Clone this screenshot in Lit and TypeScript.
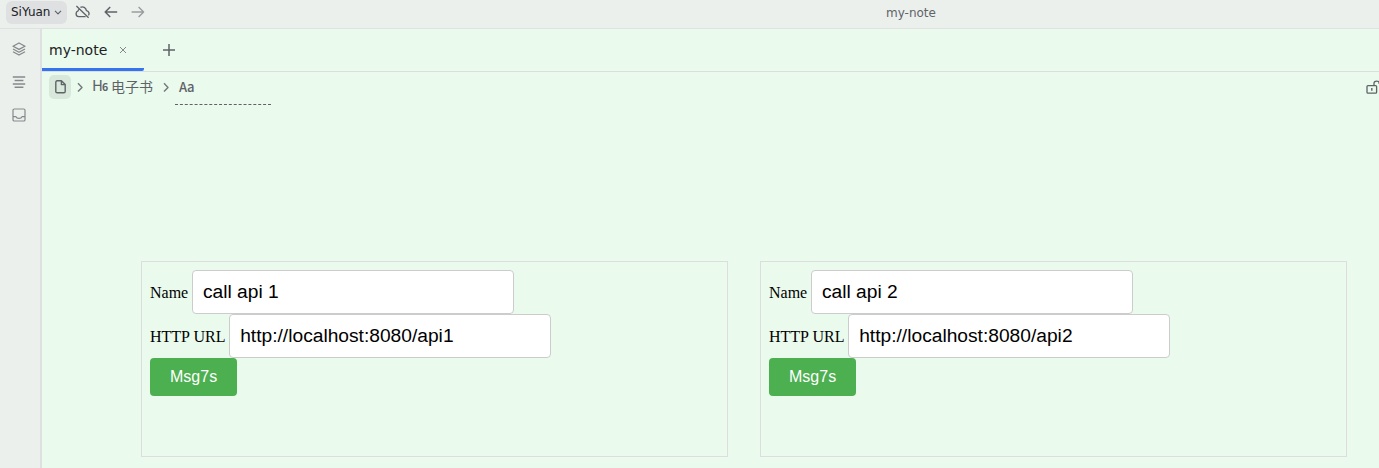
import { LitElement, html, css, svg } from "lit";
import { customElement, property } from "lit/decorators.js";

const icon = (body: unknown, w: number, h = w, cls = "") => html`
  <svg class=${cls} width=${w} height=${h} viewBox="0 0 ${w} ${h}" fill="none"
    stroke="currentColor" stroke-width="1.2" stroke-linejoin="round">${body}</svg>`;

const chevronDown = svg`<path d="M1 2.8 L4 5.8 L7 2.8"/>`;
const chevronRight = svg`<path d="M2 1.2 L6 5.4 L2 9.6" stroke-width="1.4"/>`;
const cloudOff = svg`<path d="M1.4 1 L13.6 12.8 M5.4 2.4 C8 1 10.9 2.8 11.4 5.6 C13.9 6 14.7 8.8 13.4 10.4 M3.8 4.3 C3.4 4.8 3.2 5.2 3.1 5.8 C0.4 6.6 0.3 11.4 3.8 11.6 H10.6" stroke-width="1.35"/>`;
const arrowLeft = svg`<path d="M13.2 7 H1.2 M6.2 2 L1.2 7 L6.2 12" stroke-width="1.5"/>`;
const arrowRight = svg`<path d="M0.6 7 H12.6 M7.6 2 L12.6 7 L7.6 12" stroke-width="1.4"/>`;
const layers = svg`<path d="M7 1 L13 4.2 L7 7.4 L1 4.2 Z M1 7 L7 10.2 L13 7 M1 9.8 L7 13 L13 9.8" stroke-width="1.3"/>`;
const outline = svg`<path d="M.8 2 H13.2 M2.6 5.5 H11.4 M.8 9 H13.2 M2.6 12.3 H11.4" stroke-width="1.4"/>`;
const inbox = svg`<rect x="1" y="1" width="12" height="12" rx="1.3"/><path d="M1 8.6 H4 C4.6 11 9.4 11 10 8.6 H13"/>`;
const cross = svg`<path d="M1 1 L7 7 M7 1 L1 7" stroke-width="1"/>`;
const plus = svg`<path d="M6 0 V12 M0 6 H12" stroke-width="1.5"/>`;
const doc = svg`<path d="M6.4 .8 H2.2 Q.8 .8 .8 2.2 V11.4 Q.8 12.8 2.2 12.8 H8.8 Q10.2 12.8 10.2 11.4 V4.6 Z M6.4 .8 V4.6 H10.2" stroke-width="1.4"/>`;
const unlock = svg`<rect x="1" y="5.6" width="9.6" height="7.6" rx="1" stroke-width="1.3"/><path d="M8 5.4 V3.2 C8 0.4 13.2 0.4 13.2 3.2 V4" stroke-width="1.3"/><path d="M5.8 8 V10.8" stroke-width="1.4"/>`;

@customElement("api-form")
class ApiForm extends LitElement {
  @property() name = "";
  @property() url = "";

  static styles = css`
    :host {
      display: block;
      box-sizing: border-box;
      width: 587px;
      height: 196px;
      padding: 8px;
      border: 1px solid #dddddd;
      font: 16px "Liberation Serif", serif;
      color: #000;
    }
    .row { display: flex; align-items: baseline; gap: 3.8px; height: 44px; }
    input {
      box-sizing: border-box;
      width: 322px;
      height: 44px;
      margin: 0;
      padding: 10px;
      border: 1px solid #ccc;
      border-radius: 4px;
      background: #fff;
      color: #000;
      font: 19.2px "Liberation Sans", sans-serif;
    }
    button {
      display: block;
      height: 38px;
      padding: 10px 20px;
      border: 0;
      border-radius: 4px;
      background: #4caf50;
      color: #fff;
      font: 16px "Liberation Sans", sans-serif;
    }
  `;

  render() {
    return html`
      <div class="row"><label>Name</label><input type="text" .value=${this.name} /></div>
      <div class="row"><label>HTTP URL</label><input type="text" .value=${this.url} /></div>
      <button>Msg7s</button>
    `;
  }
}

@customElement("app-root")
class AppRoot extends LitElement {
  static styles = css`
    :host {
      display: flex;
      flex-direction: column;
      height: 468px;
      overflow: hidden;
      background: #ecf0ed;
      color: #5f6368;
      font: 12px "DejaVu Sans", "Noto Sans CJK SC", sans-serif;
    }
    svg { display: block; flex: none; }
    .toolbar {
      box-sizing: border-box;
      display: grid;
      grid-template-columns: 443px 936px;
      height: 29px;
      padding-bottom: 4px;
      border-bottom: 1px solid #dfe0e1;
    }
    .tools { display: flex; align-items: center; padding-left: 6px; }
    .workspace {
      box-sizing: border-box;
      display: flex;
      align-items: center;
      gap: 4px;
      width: 61px;
      height: 23px;
      padding-left: 5px;
      border-radius: 6px;
      background: #dee0e1;
      color: #202124;
    }
    .workspace svg { color: #5f6368; }
    .cloud { margin-left: 8px; }
    .back { margin-left: 14px; }
    .forward { margin-left: 13px; color: #9a9d9f; }
    .title { display: flex; align-items: center; padding: 1px 0 0 443px; }
    .body { display: flex; flex: 1; min-height: 0; }
    .dock {
      box-sizing: border-box;
      display: flex;
      flex-direction: column;
      align-items: center;
      gap: 19px;
      width: 42px;
      padding: 13px 2px 0 0;
      border-right: 2px solid #dfe0e1;
      color: #85898b;
    }
    .main { flex: 1; min-width: 0; background: #eafaed; }
    .tabs {
      box-sizing: border-box;
      display: flex;
      height: 43px;
      border-bottom: 1px solid #dadfdd;
    }
    .tab {
      box-sizing: border-box;
      display: flex;
      align-items: center;
      width: 102px;
      height: 42px;
      padding-left: 7px;
      border-bottom: 3px solid #3573f0;
      border-radius: 0 0 2px 0;
      color: #202124;
      font-size: 14px;
      padding-top: 2px;
    }
    .close { margin-left: 12px; color: #85898b; }
    .add { margin: 15px 0 0 19px; }
    .crumbs { display: flex; align-items: flex-start; height: 34px; padding-left: 7px; }
    .file {
      display: grid;
      place-items: center;
      width: 22px;
      height: 24px;
      margin-top: 3px;
      border-radius: 5px;
      background: #d8e8db;
    }
    .sep { margin: 10px 0 0 5px; color: #74797c; }
    .heading {
      display: flex;
      align-items: center;
      margin-left: 8px;
      height: 28px;
      font: 14px "Noto Sans CJK SC", sans-serif;
    }
    .mark { display: flex; align-items: baseline; width: 19px; font-size: 15px; line-height: 20px; white-space: nowrap; }
    .level { margin-left: -1px; font-size: 10.5px; font-weight: 700; }
    .sep2 { margin-left: 9px; }
    .current {
      box-sizing: border-box;
      width: 96px;
      height: 33px;
      margin-left: 5px;
      padding: 0 4px;
      border-bottom: 1px dashed #5f6368;
      font: 500 13px/29px "Noto Sans CJK SC", sans-serif;
      letter-spacing: -0.3px;
    }
    .lock { margin: 8px 0 0 auto; margin-right: -1px; }
    .canvas { display: flex; gap: 32px; padding: 155px 0 0 99px; }
    api-form { flex: none; }
  `;

  render() {
    return html`
      <div class="toolbar">
        <div class="tools">
          <div class="workspace"><span>SiYuan</span>${icon(chevronDown, 8)}</div>
          ${icon(cloudOff, 15, 14, "cloud")}
          ${icon(arrowLeft, 14, 14, "back")}
          ${icon(arrowRight, 14, 14, "forward")}
        </div>
        <div class="title">my-note</div>
      </div>
      <div class="body">
        <div class="dock">${icon(layers, 14)}${icon(outline, 14)}${icon(inbox, 14)}</div>
        <div class="main">
          <div class="tabs">
            <div class="tab"><span>my-note</span>${icon(cross, 8, 8, "close")}</div>
            ${icon(plus, 12, 12, "add")}
          </div>
          <div class="crumbs">
            <div class="file">${icon(doc, 11, 14)}</div>
            ${icon(chevronRight, 8, 11, "sep")}
            <div class="heading">
              <span class="mark">H<span class="level">6</span></span><span>电子书</span>
            </div>
            ${icon(chevronRight, 8, 11, "sep sep2")}
            <div class="current">Aa</div>
            ${icon(unlock, 14, 14, "lock")}
          </div>
          <div class="canvas">
            <api-form name="call api 1" url="http://localhost:8080/api1"></api-form>
            <api-form name="call api 2" url="http://localhost:8080/api2"></api-form>
          </div>
        </div>
      </div>
    `;
  }
}
